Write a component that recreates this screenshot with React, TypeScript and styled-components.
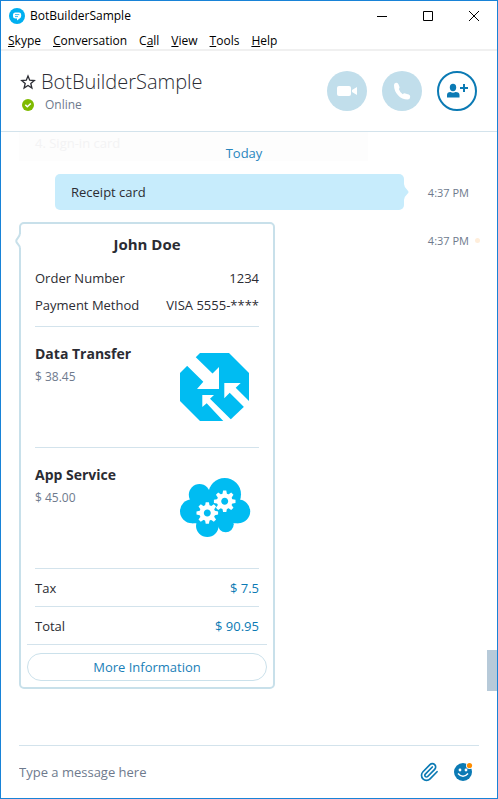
import React from "react";
import styled, { createGlobalStyle, css } from "styled-components";
import { Paperclip } from "lucide-react";

const blue = "#0b7ab4";
const line = "#d3e3ec";
const ink = "#2b2c33";
const muted = "#6e7a8d";
const azure = "#00bcf2";

const GlobalStyle = createGlobalStyle`
  * { box-sizing: border-box; }
  body { margin: 0; font-family: "Open Sans", "Noto Sans", sans-serif; font-size: 13px; color: ${ink}; background: #fff; }
  button, input { font: inherit; color: inherit; }
  button { padding: 0; border: 0; background: none; cursor: pointer; }
  h1, h2, h3, p, dl, dt, dd { margin: 0; font-weight: 400; }
`;

const Window = styled.div`
  display: flex;
  flex-direction: column;
  min-height: 100vh;
  border: 1px solid #1883d7;
  background: #fff;
`;

const TitleBar = styled.header`
  display: flex;
  align-items: center;
  height: 29px;
  padding-left: 8px;
  font-size: 12px;
  color: #000;
`;

const AppName = styled.span`
  flex: 1;
  margin-left: 5px;
`;

const WindowButton = styled.button`
  display: flex;
  align-items: center;
  justify-content: center;
  width: 46px;
  height: 29px;
`;

const MenuBar = styled.nav`
  display: flex;
  gap: 12px;
  height: 21px;
  padding-left: 7px;
  border-bottom: 2px solid #f0f0f0;
  font-size: 12px;
  line-height: 21px;
  color: #000;
`;

const MenuItem = styled.button`
  height: 19px;
`;

const ContactHeader = styled.section`
  display: flex;
  align-items: center;
  height: 81px;
  padding: 0 20px 0 19px;
  border-bottom: 1px solid ${line};
`;

const Contact = styled.div`
  display: grid;
  grid-template-columns: 16px 1fr;
  column-gap: 5px;
  align-items: center;
  flex: 1;
`;

const ContactName = styled.h1`
  font-size: 20px;
  font-weight: 300;
  line-height: 28px;
`;

const Status = styled.p`
  padding-left: 4px;
  font-size: 12px;
  line-height: 18px;
  color: ${muted};
`;

const IconCell = styled.span`
  display: flex;
  justify-content: center;
`;

const Actions = styled.div`
  display: flex;
  gap: 15px;
`;

const RoundButton = styled.button<{ $outlined?: boolean }>`
  display: flex;
  align-items: center;
  justify-content: center;
  width: 40px;
  height: 40px;
  border-radius: 50%;
  ${({ $outlined }) =>
    $outlined
      ? css`border: 2px solid ${blue};`
      : css`background: #c1deeb;`}
`;

const Conversation = styled.main`
  position: relative;
  flex: 1;
  padding: 0 28px 0 18px;
`;

const FadedMessage = styled.p`
  height: 29px;
  margin-right: 101px;
  padding: 1px 16px;
  line-height: 20px;
  color: #f3f3f4;
  background: #fdfdfd;
`;

const DayLabel = styled.p`
  position: absolute;
  top: 12px;
  left: 0;
  right: 10px;
  line-height: 18px;
  text-align: center;
  color: #2a86bd;
`;

const ScrollThumb = styled.div`
  position: absolute;
  right: 0;
  bottom: 54px;
  width: 10px;
  height: 41px;
  background: #b7cad9;
`;

const MessageRow = styled.article`
  display: flex;
  justify-content: space-between;
  margin-top: 12px;
`;

const SentRow = styled(MessageRow)`
  margin-top: 13px;
  padding-left: 36px;
`;

const SentBubble = styled.p`
  position: relative;
  flex: 1;
  margin-right: 24px;
  padding: 0 16px;
  border-radius: 5px;
  line-height: 36px;
  background: #c7ecfc;
`;

const SentTail = styled.svg`
  position: absolute;
  left: 100%;
  top: 10px;
`;

const Time = styled.time<{ $unread?: boolean }>`
  position: relative;
  padding-top: 2px;
  font-size: 11px;
  line-height: 34px;
  white-space: nowrap;
  color: ${muted};
  ${({ $unread }) =>
    $unread &&
    css`
      &::after {
        content: "";
        position: absolute;
        right: -11px;
        top: 16px;
        width: 5px;
        height: 5px;
        border-radius: 50%;
        background: #ffeedb;
      }
    `}
`;

const Card = styled.section`
  position: relative;
  width: 256px;
  padding-bottom: 6px;
  border: 2px solid #c8e0ea;
  border-radius: 5px;
`;

const CardTail = styled.svg`
  position: absolute;
  left: -6px;
  top: 9px;
`;

const CardBody = styled.div`
  padding: 0 14px;
`;

const CardTitle = styled.h2`
  font-size: 15px;
  font-weight: 700;
  line-height: 41px;
  text-align: center;
`;

const Facts = styled.dl`
  padding-bottom: 7px;
`;

const Fact = styled.div<{ $ruled?: boolean }>`
  display: flex;
  justify-content: space-between;
  line-height: 27px;
  ${({ $ruled }) =>
    $ruled &&
    css`
      height: 38px;
      border-top: 1px solid ${line};
      line-height: 39px;
      & > dd { color: ${blue}; }
    `}
`;

const Product = styled.section`
  display: flex;
  justify-content: space-between;
  height: 121px;
  padding-top: 16px;
  border-top: 1px solid ${line};
`;

const ProductName = styled.h3`
  font-size: 14px;
  font-weight: 700;
  line-height: 22px;
`;

const Price = styled.p`
  font-size: 12px;
  line-height: 24px;
  color: ${muted};
`;

const CardFooter = styled.footer`
  margin: 0 6px;
  padding-top: 8px;
  border-top: 1px solid ${line};
`;

const PillButton = styled.button`
  display: block;
  width: 100%;
  height: 28px;
  border: 1px solid #cbe1eb;
  border-radius: 14px;
  color: #1a7fb8;
`;

const Composer = styled.form`
  display: flex;
  align-items: center;
  gap: 14px;
  height: 53px;
  margin: 0 18px;
  padding-right: 6px;
  border-top: 1px solid ${line};
`;

const MessageInput = styled.input`
  flex: 1;
  min-width: 0;
  padding: 0;
  border: 0;
  outline: 0;
  &::placeholder { color: ${muted}; opacity: 1; }
`;

const IconButton = styled.button`
  display: flex;
`;

const menus = [
  { before: "", key: "S", after: "kype" },
  { before: "", key: "C", after: "onversation" },
  { before: "C", key: "a", after: "ll" },
  { before: "", key: "V", after: "iew" },
  { before: "", key: "T", after: "ools" },
  { before: "", key: "H", after: "elp" },
];

const gearTeeth = [0, 45, 90, 135, 180, 225, 270, 315];

function Gear({ x, y }: { x: number; y: number }) {
  return (
    <g transform={`translate(${x} ${y})`}>
      {gearTeeth.map((angle) => (
        <path key={angle} d="M-2.400-6.500-1.600-10.800H1.600L2.400-6.500Z" fill="#fff" transform={`rotate(${angle})`} />
      ))}
      <circle r="5.700" fill={azure} stroke="#fff" strokeWidth="4.400" />
    </g>
  );
}

function TransferArt() {
  return (
    <svg width="79" height="90" viewBox="0 0 79 90" aria-hidden="true">
      <path d="M20 10H49L69 30V59L49 78H20L0 58V30Z" fill={azure} />
      <g fill="#fff">
        <path d="M5 20.700 23.300 38.700 17 46H39V24L32.500 30.500 13.500 12Z" />
        <path d="M44.300 40H60.700L55.700 44.700 72 61 66 66 49.700 49.700 44.300 55.300Z" />
        <path d="M22.300 52H34L30 55.700 53 78.500 47 82 26.700 60.300 22.300 64Z" />
      </g>
    </svg>
  );
}

function ServiceArt() {
  return (
    <svg width="79" height="90" viewBox="0 0 79 90" aria-hidden="true">
      <g fill={azure}>
        <circle cx="12" cy="47.300" r="12" />
        <circle cx="19.500" cy="30.700" r="10.700" />
        <circle cx="44.700" cy="30.300" r="16.300" />
        <circle cx="58.300" cy="47.300" r="11.900" />
        <circle cx="27.300" cy="61.700" r="11.300" />
        <circle cx="45.700" cy="60.300" r="8" />
        <path d="M12 35.500 20 28H50L58.300 35.500V59.200H12Z" />
      </g>
      <Gear x={44.7} y={37.3} />
      <Gear x={27.3} y={49} />
    </svg>
  );
}

export default function App() {
  return (
    <>
      <GlobalStyle />
      <Window>
        <TitleBar>
          <svg width="16" height="16" viewBox="0 0 16 16" aria-hidden="true">
            <circle cx="8" cy="8" r="8" fill="#00aff0" />
            <path d="M6 4.500h4a2.200 2.200 0 0 1 2.200 2.200v1.300q0 2-2.200 3L8 12.600v-2H6.500a2.500 2.500 0 0 1-2.500-2.500V6.700A2.200 2.200 0 0 1 6 4.500Z" fill="#fff" />
            <path d="M6 6.600h4.300M6 8.600h3" stroke="#00aff0" strokeWidth=".8" />
          </svg>
          <AppName>BotBuilderSample</AppName>
          <WindowButton aria-label="Minimize">
            <svg width="10" height="10"><path d="M0 5.500H10" stroke="#000" /></svg>
          </WindowButton>
          <WindowButton aria-label="Maximize">
            <svg width="10" height="10"><path d="M.5.5h9v9h-9Z" fill="none" stroke="#000" /></svg>
          </WindowButton>
          <WindowButton aria-label="Close">
            <svg width="10" height="10"><path d="M0 0 10 10M10 0 0 10" stroke="#000" /></svg>
          </WindowButton>
        </TitleBar>
        <MenuBar>
          {menus.map(({ before, key, after }) => (
            <MenuItem key={key}>{before}<u>{key}</u>{after}</MenuItem>
          ))}
        </MenuBar>
        <ContactHeader>
          <Contact>
            <IconCell>
              <svg width="16" height="16" viewBox="0 0 16 16" fill="none" stroke={ink} strokeWidth="1.300" aria-hidden="true">
                <path d="M8 1.900 9.700 6.200 14.300 6.500 10.800 9.500 11.900 14 8 11.500 4.100 14 5.200 9.500 1.700 6.500 6.300 6.200Z" />
              </svg>
            </IconCell>
            <ContactName>BotBuilderSample</ContactName>
            <IconCell>
              <svg width="12" height="12" viewBox="0 0 12 12" aria-hidden="true">
                <circle cx="6" cy="6" r="6" fill="#7fba00" />
                <path d="m3.300 5.800 2 2 3.500-3.300" fill="none" stroke="#fff" strokeWidth="1.500" />
              </svg>
            </IconCell>
            <Status>Online</Status>
          </Contact>
          <Actions>
            <RoundButton aria-label="Video call">
              <svg width="20" height="12" viewBox="0 0 20 12" fill="#fff"><rect y="1" width="14" height="10" rx="2" /><path d="M15 5 20 2V10L15 7Z" /></svg>
            </RoundButton>
            <RoundButton aria-label="Call">
              <svg width="18" height="18" viewBox="0 0 18 18" fill="#fff">
                <path d="M1 3Q1 1 3 .8 5 .6 5.600 2.400L6.500 5Q6.800 6 5.800 7 6.800 10 9.700 12.200 11 11 12.200 11.500L15.800 12.600Q17.400 13.200 17.200 15 17 17.500 14.500 17.600 9 17.500 5 13.200 1 9 1 3Z" />
              </svg>
            </RoundButton>
            <RoundButton $outlined aria-label="Add people">
              <svg width="22" height="16" viewBox="0 0 22 16" fill={blue}>
                <ellipse cx="7" cy="4.500" rx="3.200" ry="3.700" />
                <path d="M1 14.500V12Q1 9 4.500 9 7 10.500 9.500 9 13.500 9 13.500 12V14.500ZM17 1h2v3h3v2h-3v3h-2V6h-3V4h3Z" />
              </svg>
            </RoundButton>
          </Actions>
        </ContactHeader>
        <Conversation>
          <FadedMessage>4. Sign-in card</FadedMessage>
          <DayLabel>Today</DayLabel>
          <SentRow>
            <SentBubble>
              Receipt card
              <SentTail width="5" height="16" viewBox="0 0 5 16" aria-hidden="true">
                <path d="M0 0Q0 3 3.500 6.200 5.500 8 3.500 9.800 0 13 0 16Z" fill="#c7ecfc" />
              </SentTail>
            </SentBubble>
            <Time>4:37 PM</Time>
          </SentRow>
          <MessageRow>
            <Card>
              <CardTail width="6" height="16" viewBox="0 0 6 16" aria-hidden="true">
                <path d="M6 1V15H4Q4 12 1.500 8 4 4 4 1Z" fill="#fff" />
                <path d="M5 0Q5 3 2.500 5.500 0 8 2.500 10.500 5 13 5 16" fill="none" stroke="#c8e0ea" strokeWidth="2" />
              </CardTail>
              <CardBody>
                <CardTitle>John Doe</CardTitle>
                <Facts>
                  <Fact><dt>Order Number</dt><dd>1234</dd></Fact>
                  <Fact><dt>Payment Method</dt><dd>VISA 5555-****</dd></Fact>
                </Facts>
                <Product>
                  <div><ProductName>Data Transfer</ProductName><Price>$ 38.45</Price></div>
                  <TransferArt />
                </Product>
                <Product>
                  <div><ProductName>App Service</ProductName><Price>$ 45.00</Price></div>
                  <ServiceArt />
                </Product>
                <dl>
                  <Fact $ruled><dt>Tax</dt><dd>$ 7.5</dd></Fact>
                  <Fact $ruled><dt>Total</dt><dd>$ 90.95</dd></Fact>
                </dl>
              </CardBody>
              <CardFooter>
                <PillButton>More Information</PillButton>
              </CardFooter>
            </Card>
            <Time $unread>4:37 PM</Time>
          </MessageRow>
          <ScrollThumb />
        </Conversation>
        <Composer onSubmit={(event) => event.preventDefault()}>
          <MessageInput aria-label="Message" placeholder="Type a message here" />
          <IconButton type="button" aria-label="Attach a file">
            <Paperclip size={20} color={blue} strokeWidth={2} />
          </IconButton>
          <IconButton type="button" aria-label="Emoticons">
            <svg width="20" height="20" viewBox="0 0 20 20">
              <circle cx="10" cy="10" r="9" fill={blue} />
              <circle cx="7" cy="8" r="1.400" fill="#fff" /><circle cx="13" cy="8" r="1.400" fill="#fff" />
              <path d="M5 11.500Q10 17 15 11.500" fill="none" stroke="#fff" strokeWidth="1.500" />
              <circle cx="16.500" cy="3.500" r="3.500" fill="#fff" /><circle cx="16.500" cy="3.500" r="2.600" fill="#ff8c00" />
            </svg>
          </IconButton>
        </Composer>
      </Window>
    </>
  );
}
